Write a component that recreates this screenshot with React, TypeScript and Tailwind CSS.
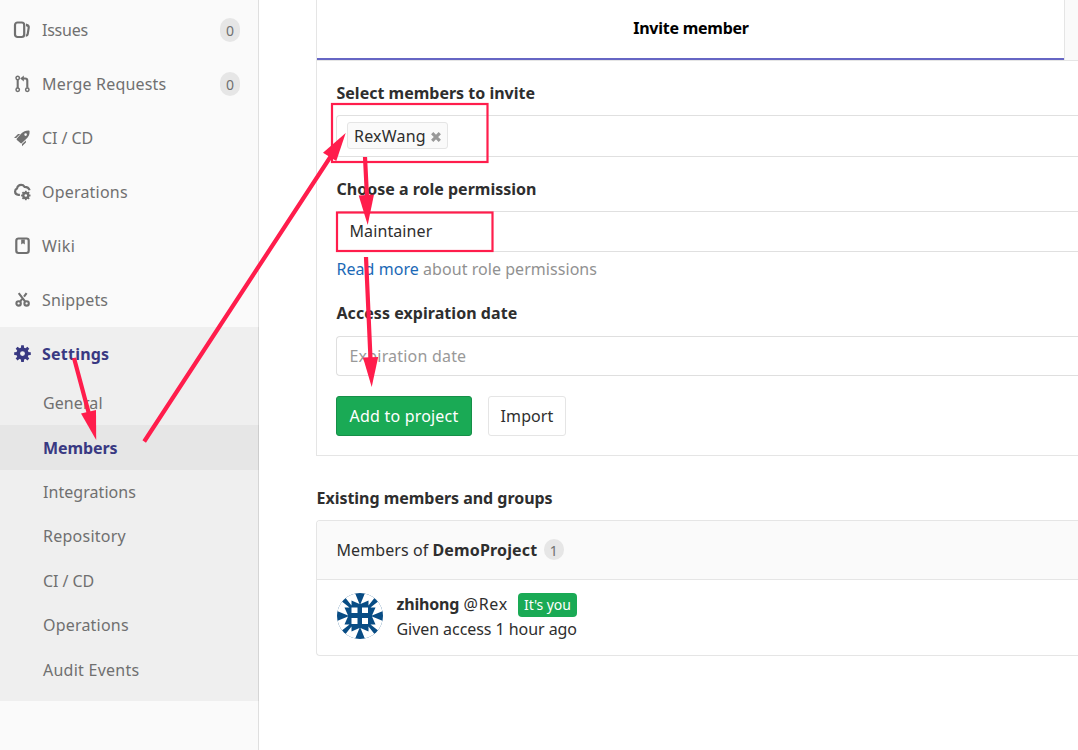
import type { ReactNode } from "react";

function Icon({ children }: { children: ReactNode }) {
  return (
    <svg viewBox="0 0 16 16" className="h-4 w-4 shrink-0 overflow-visible" fill="currentColor">
      {children}
    </svg>
  );
}

const issuesIcon = (
  <Icon>
    <rect x="1" y="0.500" width="9.200" height="14.500" rx="2.500" fill="none" stroke="currentColor" strokeWidth="2.200" />
    <path d="M12 1.600l1.400.4c1.900.6 2.700 1.900 2.400 3.700l-1 6.300c-.3 1.700-1.300 2.700-3 2.700v-2c.6-.2.800-.6.900-1.200l.9-5.700c.1-.7-.1-1.200-.8-1.400l-.8-.2z" />
  </Icon>
);

const mergeIcon = (
  <Icon>
    <g fill="none" stroke="currentColor">
      <circle cx="3.700" cy="2" r="1.700" strokeWidth="1.500" />
      <circle cx="3.700" cy="13.800" r="1.700" strokeWidth="1.500" />
      <circle cx="13.300" cy="13.800" r="1.700" strokeWidth="1.500" />
      <path d="M3.700 4v8" strokeWidth="2.100" />
      <path d="M8.500 2.500h2.600q2.200 0 2.200 2.200v7" strokeWidth="2.100" />
    </g>
    <path d="M9.800-.5v6L6.200 2.500z" />
  </Icon>
);

const rocketIcon = (
  <Icon>
    <path
      fillRule="evenodd"
      d="M14.700.5c.6 0 .9.300.9.900.1 3-1 5.300-3.200 7.400l-4.500 4.200c-.5.500-1 .5-1.500 0L2.900 10c-.5-.5-.5-1 0-1.500l4.400-4.900C9.300 1.500 12 .4 14.700.5zM11.600 3.300a1.300 1.300 0 1 0 0 2.600 1.300 1.300 0 0 0 0-2.600z"
    />
    <path d="M4 4.100h2.200L2.200 8H0zM11.900 10.400v2.200l-3.900 3.600v-2.200z" />
  </Icon>
);

const gearTeeth = [0, 45, 90, 135, 180, 225, 270, 315];

const operationsIcon = (
  <Icon>
    <path
      d="M5.900 10.800H4.500C2.500 10.800 1.100 9.500 1.100 7.600c0-1.400.8-2.500 1.900-3C3.500 2.200 5 .9 7.100.9c1.500 0 2.700.7 3.500 1.900 2.500 0 4.300 1 5 3.500"
      fill="none"
      stroke="currentColor"
      strokeWidth="2.200"
    />
    <circle cx="11.800" cy="11.500" r="2.500" fill="none" stroke="currentColor" strokeWidth="2.300" />
    {gearTeeth.map((a) => (
      <rect key={a} x="10.900" y="6.800" width="1.800" height="1.800" transform={`rotate(${a} 11.800 11.500)`} />
    ))}
  </Icon>
);

const wikiIcon = (
  <Icon>
    <rect x="2.300" y="0.500" width="12.400" height="14.500" rx="2.200" fill="none" stroke="currentColor" strokeWidth="2.200" />
    <path d="M7.200 1.500h3.600v5L9 5.200 7.200 6.500z" />
  </Icon>
);

const snippetsIcon = (
  <Icon>
    <g fill="none" stroke="currentColor">
      <circle cx="4.600" cy="11.400" r="2.200" strokeWidth="2.100" />
      <circle cx="12.600" cy="11.400" r="2.200" strokeWidth="2.100" />
      <path d="M4.700 1.100l6.500 8.500M12.600 1.100L10 4.600M8 7.200L5.900 9.800" strokeWidth="2.100" />
    </g>
  </Icon>
);

const settingsIcon = (
  <Icon>
    <circle cx="8.500" cy="7.600" r="4.300" fill="none" stroke="currentColor" strokeWidth="3.700" />
    {gearTeeth.map((a) => (
      <path key={a} d="M6.800 2.600L7.200-.7h2.600L10.200 2.600z" transform={`rotate(${a} 8.500 7.600)`} />
    ))}
  </Icon>
);

const navItems = [
  { label: "Issues", icon: issuesIcon, tracking: "tracking-[-0.25px]", count: 0 },
  { label: "Merge Requests", icon: mergeIcon, tracking: "tracking-[0.18px]", count: 0 },
  { label: "CI / CD", icon: rocketIcon, tracking: "tracking-[-0.05px]" },
  { label: "Operations", icon: operationsIcon, tracking: "tracking-[0.2px]" },
  { label: "Wiki", icon: wikiIcon, tracking: "tracking-[0.4px]" },
  { label: "Snippets", icon: snippetsIcon, tracking: "tracking-[0.15px]" },
];

const subItems = [
  { label: "General", tracking: "tracking-[0.1px]" },
  { label: "Members", tracking: "tracking-[-0.1px]", active: true },
  { label: "Integrations", tracking: "tracking-[0.05px]" },
  { label: "Repository", tracking: "tracking-[0.25px]" },
  { label: "CI / CD", tracking: "tracking-[-0.05px]" },
  { label: "Operations", tracking: "tracking-[0.2px]" },
  { label: "Audit Events", tracking: "tracking-[0.25px]" },
];

function Sidebar() {
  return (
    <aside className="flex h-full w-[259px] shrink-0 flex-col bg-[#fafafa] pt-[3px] text-[#707070] shadow-[inset_-1px_0_0_#dfdfdf]">
      {navItems.map((item) => (
        <div key={item.label} className="flex h-[54px] shrink-0 items-center pr-[19px] pl-[14px]">
          {item.icon}
          <span className={`ml-[12px] ${item.tracking}`}>{item.label}</span>
          {item.count !== undefined && (
            <span className="ml-auto flex h-6 w-5 items-center justify-center rounded-[10px] bg-[#e6e6e6] pt-px text-[14px]">
              {item.count}
            </span>
          )}
        </div>
      ))}
      <div className="h-[374px] shrink-0 bg-black/[0.045]">
        <div className="flex h-[54px] items-center pl-[14px] font-bold text-[#393982]">
          {settingsIcon}
          <span className="ml-[12px] tracking-[0.22px]">Settings</span>
        </div>
        {subItems.map((item) => (
          <div
            key={item.label}
            className={`flex h-[44.4px] items-center pl-[43px] ${item.tracking} ${
              item.active ? "bg-black/[0.035] font-bold text-[#393982]" : ""
            }`}
          >
            {item.label}
          </div>
        ))}
      </div>
    </aside>
  );
}

function InvitePanel() {
  return (
    <section className="h-[456px] shrink-0 border-b border-l border-[#e5e5e5]">
      <div className="flex h-[61px] border-b border-[#e5e5e5]">
        <div className="flex w-[747px] shrink-0 items-center justify-center border-b-2 border-[#6666c4] pb-[2px] pl-px font-bold tracking-[-0.25px] text-black">
          <span>Invite member</span>
        </div>
        <div className="flex-1 border-l border-[#e5e5e5] bg-[#fafafa]" />
      </div>
      <div className="flex flex-col pl-[19px]">
        <label className="mt-[20px] pl-[0.5px] font-bold">Select members to invite</label>
        <div className="mt-[10px] flex h-[42px] items-center rounded-l border border-r-0 border-[#e0e0e0] pl-[10px]">
          <div className="mb-px flex h-[27px] w-[101px] items-center rounded-[3px] border border-[#e5e5e5] bg-[#fafafa] pl-[6px]">
            <span className="pt-px tracking-[0.2px]">RexWang</span>
            <svg viewBox="0 0 10 10" className="mt-[3px] ml-[5px] h-[10px] w-[10px]">
              <path d="M1.200 1.200l7.600 7.600M8.800 1.200L1.200 8.800" stroke="#999" strokeWidth="3.200" />
            </svg>
          </div>
        </div>
        <label className="mt-[20px] pl-[0.5px] font-bold">Choose a role permission</label>
        <div className="mt-[10px] flex h-[41px] items-center rounded-l border border-r-0 border-[#e0e0e0] pb-[2px] pl-[12.5px] tracking-[0.1px]">
          Maintainer
        </div>
        <p className="mt-[5px] pl-[0.5px] text-[#919191]">
          <span className="tracking-[0.05px] text-[#1b69b6]">Read more</span>
          <span className="tracking-[0.05px]"> about role permissions</span>
        </p>
        <label className="mt-[20px] pl-[0.5px] font-bold tracking-[0.05px]">Access expiration date</label>
        <div className="mt-[11px] flex h-[40px] items-center rounded-l border border-r-0 border-[#dfdfdf] pl-[12.5px] tracking-[0.2px] text-[#999]">
          Expiration date
        </div>
        <div className="mt-[20px] flex gap-4">
          <button className="h-[40px] w-[136px] rounded-[3px] border border-[#168f48] bg-[#1aaa55] tracking-[0.2px] text-white">
            Add to project
          </button>
          <button className="h-[40px] w-[78px] rounded-[3px] border border-[#e5e5e5] tracking-[0.1px]">Import</button>
        </div>
      </div>
    </section>
  );
}

function Avatar() {
  return (
    <svg viewBox="0 0 46 46" className="h-[46px] w-[46px] shrink-0">
      <clipPath id="avatar-clip">
        <circle cx="23" cy="23" r="23" />
      </clipPath>
      <g clipPath="url(#avatar-clip)">
        <rect width="46" height="46" fill="#084c84" />
        {[0, 90, 180, 270].map((a) => (
          <g key={a} fill="#fff" transform={`rotate(${a} 23 23)`}>
            <path d="M7 3L18 0L22.500 11L14.500 7.500L14.500 12.500z" />
            <path d="M39 3L28 0L23.500 11L31.500 7.500L31.500 12.500z" />
          </g>
        ))}
        <g fill="#fff">
          <rect x="14.500" y="14.500" width="6" height="5.500" />
          <rect x="25" y="14.500" width="6" height="5.500" />
          <rect x="14.500" y="25" width="6" height="6" />
          <rect x="25" y="25" width="6" height="6" />
        </g>
      </g>
    </svg>
  );
}

function MembersCard() {
  return (
    <section className="mt-[10px] h-[136px] shrink-0 overflow-hidden rounded-l border border-r-0 border-[#e5e5e5]">
      <div className="flex h-[59px] items-center border-b border-[#e5e5e5] bg-[#fafafa] pl-[19.5px]">
        <span className="tracking-[0.1px]">Members of</span>
        <b className="ml-[4px] tracking-[0.15px]">DemoProject</b>
        <span className="mb-[2px] ml-[6.5px] flex h-[21px] w-5 items-center justify-center rounded-[10px] bg-[#e6e6e6] pt-[3px] text-[14px] text-[#707070]">
          1
        </span>
      </div>
      <div className="flex pt-[13px] pl-[20px]">
        <Avatar />
        <div className="ml-[13.5px]">
          <div className="flex h-[24px] items-center">
            <b className="pb-[2px] tracking-[-0.2px]">zhihong</b>
            <span className="ml-[4.5px] pb-[2px] tracking-[0.7px]">@Rex</span>
            <span className="ml-[10px] flex h-6 w-[59px] items-center justify-center rounded-[4px] bg-[#1aaa55] text-[14px] tracking-[-0.1px] text-white">
              It's you
            </span>
          </div>
          <p className="tracking-[-0.06px]">Given access 1 hour ago</p>
        </div>
      </div>
    </section>
  );
}

function Annotations() {
  return (
    <svg viewBox="0 0 1078 750" className="pointer-events-none absolute inset-0 h-[750px] w-[1078px]">
      <g fill="none" stroke="#ff1d4c">
        <rect x="332" y="104" width="155.500" height="58" strokeWidth="2.200" />
        <rect x="337" y="212.500" width="155.500" height="38.500" strokeWidth="2.200" />
        <path d="M74 358L89 414M144.200 441.500L331 156M365 157L367 197M366 257L370.500 359" strokeWidth="4.200" />
      </g>
      <g fill="#ff1d4c">
        <path d="M96.200 440L81 413.500 96 410z" />
        <path d="M345.700 133L323 152.700 336.300 161z" />
        <path d="M367.700 225L358.700 195.500 374 194.500z" />
        <path d="M371.700 387L363 357.500 378.200 357z" />
      </g>
    </svg>
  );
}

export default function App() {
  return (
    <div className="relative flex h-[750px] w-full max-w-[1078px] overflow-hidden bg-white font-['Noto_Sans',sans-serif] text-[16px] leading-6 text-[#2e2e2e]">
      <Sidebar />
      <main className="flex min-w-0 flex-1 flex-col pl-[57px]">
        <InvitePanel />
        <h2 className="mt-[30px] pl-[0.5px] font-bold tracking-[-0.03px]">Existing members and groups</h2>
        <MembersCard />
      </main>
      <Annotations />
    </div>
  );
}
